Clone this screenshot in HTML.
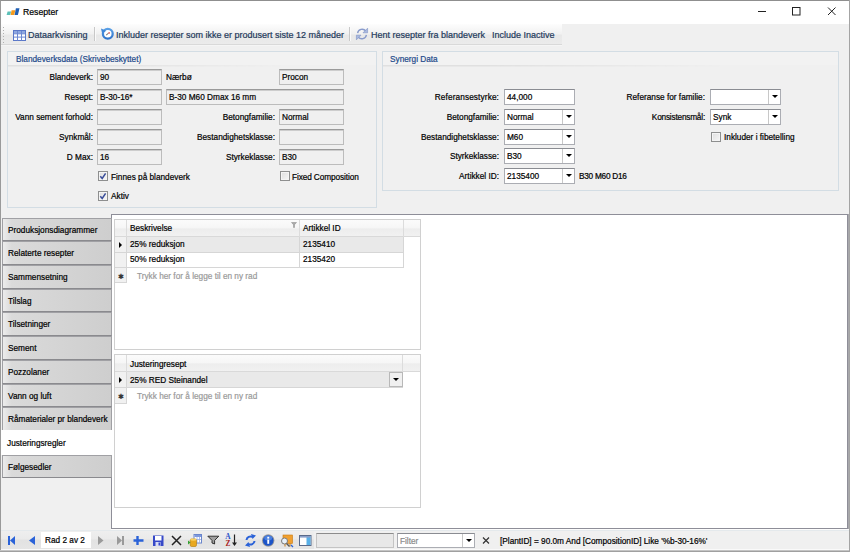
<!DOCTYPE html>
<html><head><meta charset="utf-8"><title>Resepter</title>
<style>
*{box-sizing:border-box;margin:0;padding:0}
html,body{width:850px;height:552px;overflow:hidden;background:#f0f0f0}
body{font-family:"Liberation Sans",sans-serif;font-size:8.25px;color:#000;position:relative;-webkit-text-stroke:0.2px}
.a{position:absolute;white-space:nowrap}
#win{position:absolute;left:0;top:0;width:850px;height:552px;border-top:1px solid #8f8f8f;border-left:1px solid #9a9a9a}
#title{left:1px;top:1px;width:849px;height:23px;background:#fff}
#title .t{left:22px;top:4px;font-size:8.7px;line-height:14px}
#tb{left:1px;top:24px;width:561px;height:22px;background:linear-gradient(#fdfdfd 0,#f1f1f1 10px,#e8e8e8 11px,#ebebeb 20px,#d9d9d9 20px,#d9d9d9 21px,#f5f5f5 21px)}
.tbt{top:28px;font-size:9px;line-height:14px;color:#1e395b}
.sep{top:27px;width:1px;height:14px;background:#c8c8c8;box-shadow:1px 0 0 #fafafa}
.gb{border:1px solid #d3dde4;background:#f0f0f0}
.gbh{height:13px;background:#f2f2f2;position:relative}
.gbh:after{content:"";position:absolute;left:0;top:13px;width:75%;height:2px;background:linear-gradient(#dcdcdc,#ececec);-webkit-mask-image:linear-gradient(90deg,#000 30%,transparent);mask-image:linear-gradient(90deg,#000 30%,transparent)}
.gbt{color:#1e4a8a;font-size:8.25px;line-height:13px}
.lbl{text-align:right;line-height:13px}
.tx{height:16px;border:1px solid #bcbcbc;border-top-color:#9a9a9a;background:#f0f0f0;line-height:14px;padding-left:2px;padding-top:1px;box-shadow:inset 0 1px 0 #cdcdcd}
.ed{height:16px;border:1px solid #abadb3;border-top-color:#8a8c92;background:#fff;line-height:14px;padding-left:2px;padding-top:1px}
.cb{height:16px;border:1px solid #abadb3;border-top-color:#8a8c92;background:#fff;line-height:14px;padding-left:2px;padding-top:1px}
.cb i{position:absolute;right:0;top:0;width:12px;height:14px;border-left:1px solid #c8c8c8;background:#fff}
.cb i:after{content:"";position:absolute;left:3px;top:5px;border:3px solid transparent;border-top:3px solid #000;border-bottom:0}
.ck{width:10px;height:10px;border:1px solid #8e8f8f;background:linear-gradient(135deg,#dedede,#f6f6f6);box-shadow:inset 0 0 0 1px #f4f4f4}
.ck svg{position:absolute;left:0;top:0}
.tab{left:2px;width:110px;height:23px;border:1px solid #a0a0a4;border-bottom-color:#8a8a8e;background:linear-gradient(90deg,#ececec,#dadada 8%,#cecece);line-height:24px;padding-left:5px}
.grid{border:1px solid #d0d0d0;background:#fff}
.gh{background:linear-gradient(#fbfbfb,#f6f6f6 50%,#ededed 55%,#f1f1f1);border-bottom:1px solid #d9d9d9}
.rh{background:#f1f1f1;border-right:1px solid #d6d6d6;border-bottom:1px solid #d6d6d6}
.arr{width:0;height:0;border:3px solid transparent;border-left:3px solid #000;border-right:0}
.dd{width:0;height:0;border:3px solid transparent;border-top:3px solid #000;border-bottom:0}
.ast{font-size:7px;line-height:13px;color:#333}
</style></head><body>
<div id="win"></div>
<div class="a" id="title"><span class="a t">Resepter</span></div>

<svg class="a" style="left:6px;top:7px" width="14" height="9" viewBox="0 0 14 9"><path d="M1.6 4.4h3.6l-1 3.6H.6z" fill="#5cc0b8"/><path d="M5.6 3.2h3.8L8.2 8H4.6z" fill="#f59a1c"/><path d="M9.9 1.2h3.6L11.9 8H8.6z" fill="#1f5fb4"/></svg>
<svg class="a" style="left:750px;top:2px" width="95" height="20" viewBox="0 0 95 20"><g fill="none" stroke="#222" stroke-width="1"><path d="M8 9.5h8"/><rect x="42.5" y="5.5" width="7.5" height="7.5"/><path d="M78 5.5l7.5 7.5M85.5 5.5L78 13"/></g></svg>
<div class="a" id="tb"></div>

<svg class="a" style="left:2px;top:26px" width="3" height="17" viewBox="0 0 3 17"><g fill="#b0b0b0"><rect x="1" y="1" width="1" height="1"/><rect x="1" y="4" width="1" height="1"/><rect x="1" y="7" width="1" height="1"/><rect x="1" y="10" width="1" height="1"/><rect x="1" y="13" width="1" height="1"/><rect x="1" y="16" width="1" height="1"/></g></svg>
<svg class="a" style="left:13px;top:30px" width="13" height="11" viewBox="0 0 13 11"><rect x=".5" y=".5" width="12" height="10" fill="#fff" stroke="#5b78c8"/><rect x="1" y="1" width="11" height="2.6" fill="#8fa8e0"/><path d="M1 3.8h11M1 7.1h11M4.5 1v9.5M8.5 1v9.5" stroke="#6c88d2" stroke-width="1" fill="none"/></svg>
<svg class="a" style="left:100px;top:27px" width="15" height="14" viewBox="0 0 15 14"><defs><linearGradient id="rg" x1="0" y1="0" x2="0" y2="1"><stop offset="0" stop-color="#5aa0e6"/><stop offset="1" stop-color="#2f74cc"/></linearGradient></defs><circle cx="7.8" cy="6.7" r="4.9" fill="#fff" stroke="url(#rg)" stroke-width="2.3"/><path d="M1 1.6l1.2 5.2 4-3z" fill="#3f86d8"/><path d="M6.2 8l2.4-1.800" stroke="#444" stroke-width=".9" fill="none"/><rect x="8.400" y="5.300" width="1.600" height="1.300" fill="#e05050"/></svg>
<svg class="a" style="left:355px;top:27px" width="14" height="14" viewBox="0 0 14 14"><g fill="none" stroke="#8a9ccc" stroke-width="1.4"><path d="M2.6 6.2a4.6 4.6 0 0 1 8.2-2.2"/><path d="M11.4 7.8a4.6 4.6 0 0 1-8.2 2.2"/></g><path d="M12.6 1.2v4.6H8z" fill="#a9b9e0" stroke="#7f93c4" stroke-width=".6"/><path d="M1.4 12.8V8.2H6z" fill="#a9b9e0" stroke="#7f93c4" stroke-width=".6"/></svg>
<span class="a tbt" style="left:28px">Dataarkvisning</span>
<span class="a sep" style="left:94px"></span>
<span class="a tbt" style="left:116px">Inkluder resepter som ikke er produsert siste 12 måneder</span>
<span class="a sep" style="left:349px"></span>
<span class="a tbt" style="left:371px">Hent resepter fra blandeverk</span>
<span class="a tbt" style="left:492px">Include Inactive</span>

<!-- group 1 -->
<div class="a gb" style="left:7px;top:51px;width:370px;height:157px"><div class="gbh"></div></div>
<span class="a gbt" style="left:16px;top:53px">Blandeverksdata (Skrivebeskyttet)</span>
<span class="a lbl" style="right:757px;top:71px">Blandeverk:</span>
<span class="a lbl" style="right:757px;top:91px">Resept:</span>
<span class="a lbl" style="right:757px;top:111px">Vann sement forhold:</span>
<span class="a lbl" style="right:757px;top:131px">Synkmål:</span>
<span class="a lbl" style="right:757px;top:151px">D Max:</span>
<div class="a tx" style="left:97px;top:69px;width:65px">90</div>
<div class="a tx" style="left:97px;top:89px;width:65px">B-30-16*</div>
<div class="a tx" style="left:97px;top:109px;width:65px"></div>
<div class="a tx" style="left:97px;top:129px;width:65px"></div>
<div class="a tx" style="left:97px;top:149px;width:65px">16</div>
<span class="a" style="left:166px;top:71px;line-height:13px">Nærbø</span>
<div class="a tx" style="left:279px;top:69px;width:65px">Procon</div>
<div class="a tx" style="left:166px;top:89px;width:178px">B-30 M60 Dmax 16 mm</div>
<span class="a lbl" style="right:575px;top:111px">Betongfamilie:</span>
<span class="a lbl" style="right:575px;top:131px">Bestandighetsklasse:</span>
<span class="a lbl" style="right:575px;top:151px">Styrkeklasse:</span>
<div class="a tx" style="left:279px;top:109px;width:65px">Normal</div>
<div class="a tx" style="left:279px;top:129px;width:65px"></div>
<div class="a tx" style="left:279px;top:149px;width:65px">B30</div>
<div class="a ck" style="left:98px;top:171px"><svg width="8" height="8" viewBox="0 0 8 8"><path d="M1.3 4.2l1.9 2.2L6.6 1.4" fill="none" stroke="#3a4e9a" stroke-width="1.5"/></svg></div>
<span class="a" style="left:111px;top:171px;line-height:13px">Finnes på blandeverk</span>
<div class="a ck" style="left:98px;top:191px"><svg width="8" height="8" viewBox="0 0 8 8"><path d="M1.3 4.2l1.9 2.2L6.6 1.4" fill="none" stroke="#3a4e9a" stroke-width="1.5"/></svg></div>
<span class="a" style="left:111px;top:190px;line-height:13px">Aktiv</span>
<div class="a ck" style="left:280px;top:171px"></div>
<span class="a" style="left:292px;top:171px;line-height:13px;letter-spacing:-0.1px">Fixed Composition</span>

<!-- group 2 -->
<div class="a gb" style="left:382px;top:51px;width:457px;height:140px"><div class="gbh"></div></div>
<span class="a gbt" style="left:390px;top:53px">Synergi Data</span>
<span class="a lbl" style="right:351px;top:91px;letter-spacing:0.12px">Referansestyrke:</span>
<span class="a lbl" style="right:351px;top:111px">Betongfamilie:</span>
<span class="a lbl" style="right:351px;top:131px">Bestandighetsklasse:</span>
<span class="a lbl" style="right:351px;top:150px">Styrkeklasse:</span>
<span class="a lbl" style="right:351px;top:170px">Artikkel ID:</span>
<div class="a ed" style="left:504px;top:89px;width:71px">44,000</div>
<div class="a cb" style="left:504px;top:109px;width:71px">Normal<i></i></div>
<div class="a cb" style="left:504px;top:129px;width:71px">M60<i></i></div>
<div class="a cb" style="left:504px;top:148px;width:71px">B30<i></i></div>
<div class="a cb" style="left:504px;top:168px;width:71px">2135400<i></i></div>
<span class="a" style="left:579px;top:170px;line-height:13px;letter-spacing:-0.25px">B30 M60 D16</span>
<span class="a lbl" style="right:145px;top:91px">Referanse for familie:</span>
<span class="a lbl" style="right:145px;top:111px;letter-spacing:-0.2px">Konsistensmål:</span>
<div class="a cb" style="left:710px;top:89px;width:71px"><i></i></div>
<div class="a cb" style="left:710px;top:109px;width:71px">Synk<i></i></div>
<div class="a ck" style="left:711px;top:132px"></div>
<span class="a" style="left:724px;top:131px;line-height:13px">Inkluder i fibetelling</span>

<!-- panel -->
<div class="a" style="left:111px;top:214px;width:737px;height:315px;background:#fff;border:1px solid #8e8e98"></div>
<div class="a tab" style="top:218px;height:23px">Produksjonsdiagrammer</div>
<div class="a tab" style="top:241px;height:24px">Relaterte resepter</div>
<div class="a tab" style="top:265px;height:24px">Sammensetning</div>
<div class="a tab" style="top:289px;height:23px">Tilslag</div>
<div class="a tab" style="top:312px;height:24px">Tilsetninger</div>
<div class="a tab" style="top:336px;height:24px">Sement</div>
<div class="a tab" style="top:360px;height:24px">Pozzolaner</div>
<div class="a tab" style="top:384px;height:23px">Vann og luft</div>
<div class="a tab" style="top:407px;height:24px">Råmaterialer pr blandeverk</div>
<div class="a tab" style="top:430px;left:1px;background:#fff;border-color:#fff;width:112px;height:25px;line-height:26px">Justeringsregler</div>
<div class="a tab" style="top:455px;height:23px">Følgesedler</div>

<!-- grid 1 -->
<div class="a grid" style="left:114px;top:219px;width:307px;height:131px"></div>
<div class="a gh" style="left:115px;top:220px;width:305px;height:17px"></div>
<div class="a" style="left:126px;top:220px;width:1px;height:17px;background:#dcdcdc"></div>
<div class="a" style="left:299px;top:220px;width:1px;height:17px;background:#dcdcdc"></div>
<div class="a" style="left:403px;top:220px;width:1px;height:17px;background:#dcdcdc"></div>
<span class="a" style="left:130px;top:222px;line-height:13px">Beskrivelse</span>
<span class="a" style="left:303px;top:222px;line-height:13px">Artikkel ID</span>
<svg class="a" style="left:291px;top:222px" width="6" height="6" viewBox="0 0 6 6"><path d="M0.5 0.5h5l-2 2.2v2.8h-1v-2.8z" fill="#aaa" stroke="#888" stroke-width=".5"/></svg>
<div class="a rh" style="left:115px;top:237px;width:12px;height:16px"></div>
<div class="a rh" style="left:115px;top:253px;width:12px;height:15px"></div>
<div class="a rh" style="left:115px;top:268px;width:12px;height:15px"></div>
<div class="a" style="left:127px;top:237px;width:277px;height:16px;background:#e9e9e9;border-bottom:1px solid #d6d6d6;border-right:1px solid #d6d6d6"></div>
<div class="a" style="left:127px;top:253px;width:277px;height:15px;background:#fff;border-bottom:1px solid #d6d6d6;border-right:1px solid #d6d6d6"></div>
<div class="a" style="left:299px;top:237px;width:1px;height:31px;background:#d6d6d6"></div>
<span class="a arr" style="left:119px;top:242px"></span>
<span class="a" style="left:130px;top:238px;line-height:13px">25% reduksjon</span>
<span class="a" style="left:303px;top:238px;line-height:13px">2135410</span>
<span class="a" style="left:130px;top:253px;line-height:13px">50% reduksjon</span>
<span class="a" style="left:303px;top:253px;line-height:13px">2135420</span>
<span class="a ast" style="left:118px;top:270px">✱</span>
<span class="a" style="left:137px;top:270px;line-height:13px;color:#9a9a9a">Trykk her for å legge til en ny rad</span>

<!-- grid 2 -->
<div class="a grid" style="left:114px;top:354px;width:307px;height:154px"></div>
<div class="a gh" style="left:115px;top:355px;width:305px;height:17px"></div>
<div class="a" style="left:126px;top:355px;width:1px;height:17px;background:#dcdcdc"></div>
<div class="a" style="left:402px;top:355px;width:1px;height:17px;background:#dcdcdc"></div>
<span class="a" style="left:130px;top:358px;line-height:13px">Justeringresept</span>
<div class="a rh" style="left:115px;top:372px;width:12px;height:16px"></div>
<div class="a rh" style="left:115px;top:388px;width:12px;height:16px"></div>
<div class="a" style="left:127px;top:372px;width:276px;height:16px;background:#e9e9e9;border-bottom:1px solid #d6d6d6;border-right:1px solid #d6d6d6"></div>
<div class="a" style="left:389px;top:372px;width:14px;height:15px;background:#f0f0f0;border:1px solid #b8b8b8"></div>
<span class="a dd" style="left:393px;top:378px"></span>
<span class="a arr" style="left:119px;top:377px"></span>
<span class="a" style="left:130px;top:374px;line-height:13px">25% RED Steinandel</span>
<span class="a ast" style="left:118px;top:390px">✱</span>
<span class="a" style="left:137px;top:390px;line-height:13px;color:#9a9a9a">Trykk her for å legge til en ny rad</span>

<!-- bottom -->
<div class="a" style="left:111px;top:529px;width:738px;height:1px;background:#fcfcfc"></div>
<div class="a" style="left:1px;top:530px;width:848px;height:20px;background:linear-gradient(#e4e9ec 0,#e4e9ec 1px,#f0f0f0 1px,#f0f0f0 19px,#fafafa 19px)"></div>
<div class="a" style="left:1px;top:531px;width:313px;height:18px;background:linear-gradient(#eeeeee 0,#eaeaea 8px,#e2e2e2 9px,#e5e5e5 18px)"></div>
<div class="a" style="left:0;top:550px;width:850px;height:2px;background:linear-gradient(#c4c4c4 0,#c4c4c4 1px,#a0a0a0 1px)"></div>
<div class="a" style="left:849px;top:0;width:1px;height:552px;background:#a4a4a4"></div><div class="a" style="left:848px;top:214px;width:1px;height:315px;background:#a8a8ac"></div>

<svg class="a" style="left:0;top:531px" width="500" height="19" viewBox="0 0 500 19">
<g fill="#2a62d8"><rect x="8" y="5" width="2" height="9"/><path d="M15 5v9l-5-4.5z"/><path d="M35 5v9l-6-4.5z"/></g>
<g fill="#9a9a9a"><path d="M98 5v9l5.5-4.500z"/><path d="M117 5v9l5-4.500z"/><rect x="122" y="5" width="2" height="9"/></g>
<path d="M137.500 5v9M133.500 9.500h10" stroke="#2a62d8" stroke-width="2.400" fill="none"/>
<g><rect x="153" y="4.500" width="10.500" height="10.500" fill="#3648c8"/><rect x="155" y="5" width="6.500" height="4.500" fill="#fff"/><rect x="155.500" y="11" width="5" height="4" fill="#d8dcf4"/><rect x="158.500" y="11.500" width="1.500" height="3" fill="#3648c8"/></g>
<path d="M172 5l9 9M181 5l-9 9" stroke="#222" stroke-width="1.500" fill="none"/>
<g><rect x="194" y="3.500" width="7.500" height="8.500" fill="#fff" stroke="#6a86cc"/><rect x="194.500" y="4" width="6.500" height="2" fill="#7f9ade"/><path d="M194.500 8.500h6.500M197 6v6M199.500 6v6" stroke="#9ab0e4" stroke-width=".8"/><rect x="190.200" y="8" width="6.300" height="7.500" rx="1.500" fill="#e8a820" stroke="#b07808" stroke-width=".6"/><ellipse cx="193.350" cy="8.600" rx="3.150" ry="1.200" fill="#f8d060"/><path d="M188 9.500l2.500 2-2.500 2z" fill="#30a030"/></g>
<path d="M207.800 5.200h11l-4.200 4.200v3.600l-2.600-1v-2.600z" fill="#a0a0a0" stroke="#222" stroke-width=".9"/>
<g><text x="225.300" y="8.300" font-family="Liberation Serif,serif" font-size="7.400" style="-webkit-text-stroke:0.1px" font-weight="bold" fill="#2a52c8">A</text><text x="225.500" y="15" font-family="Liberation Serif,serif" font-size="7.400" style="-webkit-text-stroke:0.1px" font-weight="bold" fill="#a82020">Z</text><path d="M234.500 3.500v10" stroke="#222" stroke-width="1.200"/><path d="M232 11.500h5l-2.500 3.500z" fill="#222"/></g>
<g fill="none" stroke="#2a62d8" stroke-width="2"><path d="M246.500 9a4 4 0 0 1 6-3"/><path d="M254.500 10a4 4 0 0 1-6 3"/></g><path d="M251 3l5 1.500-3.500 3.500z" fill="#2a62d8"/><path d="M250 16l-5-1.500 3.500-3.500z" fill="#2a62d8"/>
<g><circle cx="268.200" cy="9.500" r="6.200" fill="#9a9a9a"/><circle cx="268.200" cy="9.500" r="5.300" fill="#1c54c8"/><ellipse cx="268.200" cy="7" rx="4" ry="2.500" fill="#4a80e0"/><rect x="267.300" y="8.600" width="1.900" height="4.200" fill="#fff"/><rect x="267.300" y="5.800" width="1.900" height="1.800" fill="#fff"/></g>
<g><rect x="283" y="4" width="9.500" height="8.500" fill="#f0a030" stroke="#c87810" stroke-width=".6"/><path d="M285 12.500v3M290 12.500v3" stroke="#c87810" stroke-width="1"/><circle cx="284.500" cy="10" r="3" fill="#e8f0f8" stroke="#7a7a7a" stroke-width="1"/><path d="M286.500 12.500l3 3" stroke="#5a5a5a" stroke-width="1.400"/><path d="M291 14l2 2" stroke="#2a62d8" stroke-width="1.200"/></g>
<g><rect x="299.500" y="4.500" width="11.500" height="10" fill="#fff" stroke="#5a6a8a" stroke-width="1"/><rect x="306.500" y="5" width="4" height="9" fill="#58b0e8"/><rect x="300" y="5" width="10.500" height="1.600" fill="#8aa0c8"/></g>
<path d="M483 6.500l6 6M489 6.500l-6 6" stroke="#333" stroke-width="1.200" fill="none"/>
</svg>
<div class="a" style="left:41px;top:532px;width:50px;height:16px;background:#fff"></div>
<span class="a" style="left:45px;top:534px;line-height:13px">Rad 2 av 2</span>
<div class="a" style="left:316px;top:533px;width:78px;height:15px;background:#e8e8e8;border:1px solid #c4c4c4;border-top-color:#8c8c8c"></div>
<div class="a cb" style="left:397px;top:533px;width:78px;height:15px;color:#8a8a8a">Filter<i style="height:13px"></i></div>
<span class="a" style="left:500px;top:535px;line-height:13px">[PlantID] = 90.0m And [CompositionID] Like '%b-30-16%'</span>
</body></html>
